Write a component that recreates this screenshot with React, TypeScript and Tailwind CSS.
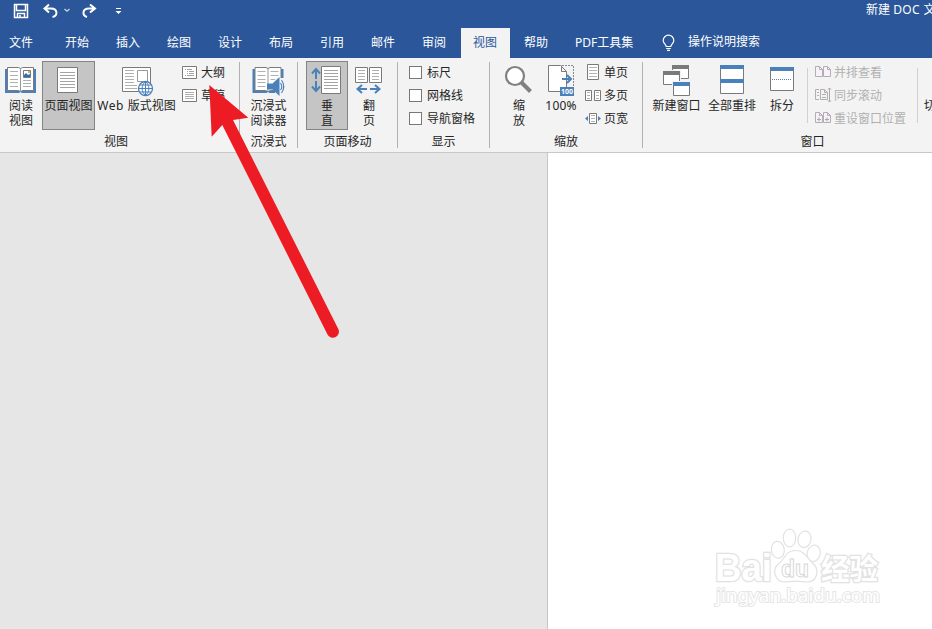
import type { ReactNode } from 'react';

const BLUE = '#4a81ba';
const GRAY = '#7a7a7a';
const LINE = '#b0b0b0';
const DIM = '#b5adb5';

const tabs = ['开始', '插入', '绘图', '设计', '布局', '引用', '邮件', '审阅', '视图', '帮助'];

/** Icon drawn in ribbon coordinates; the box is [x, y, width, height]. */
function Icon({ box, children }: { box: [number, number, number, number]; children: ReactNode }) {
  return (
    <svg className="block shrink-0" width={box[2]} height={box[3]} viewBox={box.join(' ')} fill="none">
      {children}
    </svg>
  );
}

function Lines({ x, w, ys, color = LINE }: { x: number; w: number; ys: number[]; color?: string }) {
  return <path d={ys.map((y) => `M${x} ${y + 0.5}h${w}`).join('')} stroke={color} />;
}

function BigButton({ x, w, lines, active, children, className = '' }: {
  x: number; w: number; lines: ReactNode[]; active?: boolean; children: ReactNode; className?: string;
}) {
  return (
    <div className={`flex h-[69px] shrink-0 flex-col items-center ${className} ${active ? 'bg-[#c5c5c5] outline outline-1 -outline-offset-1 outline-[#848484]' : ''}`} style={{ width: w }}>
      <Icon box={[x, 61, w, 37]}>{children}</Icon>
      {lines.map((l, i) => (
        <div key={i} className="h-[15px] leading-[15px] whitespace-nowrap">{l}</div>
      ))}
    </div>
  );
}

function Group({ label, className = '', labelClass = '', children, last }: {
  label: string; className?: string; labelClass?: string; children: ReactNode; last?: boolean;
}) {
  return (
    <>
      <div className={`flex shrink-0 flex-col pt-[3px] ${className}`}>
        <div className="flex h-[73px]">{children}</div>
        <div className={`text-center leading-4 ${labelClass}`}>{label}</div>
      </div>
      {!last && <div className="mt-1 h-[86px] w-px shrink-0 bg-[#b1b1b1]" />}
    </>
  );
}

function SmallRow({ children, label, className = '' }: { children: ReactNode; label: string; className?: string }) {
  return (
    <div className="flex h-[23px] items-center">
      {children}
      <span className={`leading-[15px] whitespace-nowrap ${className}`}>{label}</span>
    </div>
  );
}

function Book({ full }: { full?: boolean }) {
  return (
    <>
      <path d="M5 69h31v24H22l-1.500-1-1.500 1H5z" fill={BLUE} />
      <path d="M7.500 67.500h11l2 1 2-1h11v23H23l-2.500 1-2.500-1H7.500z" fill="#fff" stroke={GRAY} />
      <path d="M20.500 69v22" stroke="#999" />
      <Lines x={10} w={8} ys={[71, 75, 79, 82, 86]} />
      <Lines x={23} w={8} ys={full ? [71, 75, 79] : [80, 83, 86]} />
    </>
  );
}

function DimPages() {
  return <path d="M815.500 66.500h4l3 3v7h-7zM823.500 66.500h4l3 3v7h-7zM819.500 66.500v3h3M827.500 66.500v3h3" fill="#f8f2f8" stroke={DIM} />;
}

function QuickAccess() {
  return (
    <div className="flex h-7 items-start justify-between overflow-hidden">
      <svg width="130" height="24" fill="none">
        <path d="M14.500 4.500h13v13h-13zM16.500 4.500v6h9v-6M17.500 17.500v-4h7v4M20 15v2.500" stroke="#fff" strokeWidth="1.500" />
        <path d="M49 4.500 44.500 8.500l4.500 4M45 8.500h6c7 0 7 7.500 1.500 8.500" stroke="#fff" strokeWidth="2" />
        <path d="m64.500 9 2.500 2.200 2.500-2.200" stroke="#cbd6e8" strokeWidth="1.300" />
        <path d="m90 4.500 5 4-5 4M94.500 8.500H89c-7 0-7 7-2 8.500" stroke="#fff" strokeWidth="2" />
        <path d="M116 8.500h5" stroke="#fff" />
        <path d="M115.500 11h6l-3 3z" fill="#fff" />
      </svg>
      <div className="w-[66px] shrink-0 pt-0.5 leading-4 whitespace-nowrap text-white">新建 <span className="tracking-[0.4px]">DOC </span>文档</div>
    </div>
  );
}

function Tabs() {
  return (
    <div className="flex h-[30px] items-stretch leading-[29px] whitespace-nowrap text-white">
      <div className="w-[53px] pl-[9px]">文件</div>
      {tabs.map((t) => (
        <div key={t} className={`mr-0.5 w-[49px] shrink-0 pl-3 ${t === '视图' ? 'bg-[#f3f3f3] text-[#2b579a]' : ''}`}>{t}</div>
      ))}
      <div className="w-[99px] shrink-0 pl-3">PDF工具集</div>
      <svg className="mt-1.5 shrink-0" width="26" height="20" fill="none" stroke="#fff" strokeWidth="1.200">
        <path d="M4.200 12.500c0-2-3-3-3-6a5.300 5.300 0 0 1 10.600 0c0 3-3 4-3 6zM4.200 14.500h4.600M5 16.300h3" />
      </svg>
      <div className="leading-[28px]">操作说明搜索</div>
    </div>
  );
}

function Ribbon() {
  return (
    <div className="flex h-[95px] overflow-hidden border-b border-[#c8c8c8] bg-[#f3f3f3] text-[#262626]">
      <Group label="视图" className="w-[239px]" labelClass="pr-[7px]">
        <BigButton x={0} w={42} lines={['阅读', '视图']}>
          <Book />
          <path d="M23.500 70.500h7v7h-7z" fill="#fff" stroke={GRAY} />
          <path d="m24 77 0-2 2-2 2 2 2-1v3z" fill="#2f6faf" />
          <path d="M28 71h2v2h-2z" fill="#e8b25b" />
        </BigButton>
        <BigButton x={42} w={53} lines={['页面视图']} active>
          <path d="M57.500 67.500h20v25h-20z" fill="#fff" stroke={GRAY} />
          <Lines x={60} w={15} ys={[72, 75, 78, 81, 84, 87]} color="#a3a3a3" />
        </BigButton>
        <BigButton x={95} w={83} lines={[<><span className="tracking-[0.6px]">Web </span>版式视图</>]}>
          <path d="M122.500 67.500h28v24h-28z" fill="#fff" stroke={GRAY} />
          <path d="M137.500 70.500h10v11h-10z" stroke="#999" />
          <Lines x={125} w={9} ys={[70, 73, 76, 79, 82]} />
          <Lines x={125} w={12} ys={[85, 88]} />
          <circle cx="145.500" cy="88.500" r="7" fill="#fff" stroke={BLUE} strokeWidth="1.300" />
          <path d="M145.500 81.500v14M138.500 88.500h14M140 85h11M140 92h11M145.500 81.500c-4.500 4-4.500 10 0 14c4.500-4 4.500-10 0-14" stroke={BLUE} />
        </BigButton>
        <div className="ml-1 flex flex-col">
          <SmallRow label="大纲">
            <Icon box={[182, 65, 19, 14]}>
              <path d="M182.500 65.500h14v12h-14z" fill="#fff" stroke={GRAY} />
              <path d="M185 68.500h1M187 68.500h5M187 70.500h1M189 70.500h5M189 72.500h5M187 72.500h1M185 74.500h1M187 74.500h7" stroke="#a3a3a3" />
            </Icon>
          </SmallRow>
          <SmallRow label="草稿">
            <Icon box={[182, 65, 19, 14]}>
              <path d="M182.500 65.500h14v12h-14z" fill="#fff" stroke={GRAY} />
              <Lines x={185} w={9} ys={[68, 70, 72, 74]} />
            </Icon>
          </SmallRow>
        </div>
      </Group>

      <Group label="沉浸式" className="w-[57px]">
        <BigButton x={241} w={57} lines={['沉浸式', '阅读器']}>
          <g transform="translate(248.500 0)"><Book full /></g>
          <path d="M276 78h10v18h-10z" fill="#f3f3f3" />
          <path d="M268 83.500h5.500l7-6.500v19l-7-6.500H268z" fill={BLUE} />
          <path d="M281.500 83q2.500 4 0 7M282.500 80q4.500 6.500 0 13" stroke={BLUE} strokeWidth="1.100" />
        </BigButton>
      </Group>

      <Group label="页面移动" className="w-[99px]">
        <BigButton x={306} w={42} lines={['垂', '直']} active className="ml-2">
          <path d="M316 79V69m-4 4.500 4-4.500 4 4.500M316 81v10m-4-4.500 4 4.500 4-4.500" stroke={BLUE} strokeWidth="2" />
          <path d="M321.500 66.500h19v27h-19z" fill="#fff" stroke={GRAY} />
          <Lines x={324} w={14} ys={[70, 73, 76, 79, 82, 85, 88]} color="#a3a3a3" />
        </BigButton>
        <BigButton x={348} w={42} lines={['翻', '页']}>
          <path d="M355.500 67.500h12v15h-12zM369.500 67.500h12v15h-12z" fill="#fff" stroke={GRAY} />
          <Lines x={358} w={7} ys={[70, 73, 76, 79]} />
          <Lines x={372} w={7} ys={[70, 73, 76, 79]} />
          <path d="M367 89h-9m4-4-4.500 4 4.500 4M370 89h9m-4-4 4.500 4-4.500 4" stroke={BLUE} strokeWidth="2" />
        </BigButton>
      </Group>

      <Group label="显示" className="w-[91px]">
        <div className="ml-[11px] flex flex-col">
          {['标尺', '网格线', '导航窗格'].map((l) => (
            <SmallRow key={l} label={l}>
              <span className="mr-[5px] size-[13px] border border-[#777] bg-white" />
            </SmallRow>
          ))}
        </div>
      </Group>

      <Group label="缩放" className="w-[152px]">
        <BigButton x={498} w={42} lines={['缩', '放']} className="ml-2">
          <path d="m521.500 82.500 9 9" stroke="#808080" strokeWidth="4" />
          <circle cx="515" cy="76" r="9" fill="#fff" stroke="#808080" strokeWidth="2.200" />
        </BigButton>
        <BigButton x={540} w={42} lines={[<span className="tracking-[0.2px]">100%</span>]}>
          <path d="M548.500 65.500h12l6 6v20h-18z" fill="#fff" stroke={GRAY} />
          <path d="M561.500 65.500v6h5" stroke={GRAY} />
          <path d="M562 65.500h11.500V87" stroke="#888" strokeDasharray="2 1" />
          <path d="M562 79h9m-4-4 4 4-4 4" stroke={BLUE} strokeWidth="2" />
          <path d="M560 87h14v9h-14z" fill={BLUE} />
          <text x="567" y="94.300" fill="#fff" fontSize="7" fontWeight="700" textAnchor="middle" className="font-['Noto_Sans',sans-serif]">100</text>
        </BigButton>
        <div className="ml-[3px] flex flex-col">
          <SmallRow label="单页">
            <Icon box={[585, 64, 19, 17]}>
              <path d="M587.500 64.500h11v15h-11z" fill="#fff" stroke={GRAY} />
              <Lines x={589} w={8} ys={[67, 70, 73, 76]} />
            </Icon>
          </SmallRow>
          <SmallRow label="多页">
            <Icon box={[585, 87, 19, 15]}>
              <path d="M585.500 89.500h6v10h-6zM594.500 89.500h6v10h-6z" fill="#fff" stroke={GRAY} />
              <Lines x={587} w={3} ys={[91, 94, 97]} />
              <Lines x={596} w={3} ys={[91, 94, 97]} />
            </Icon>
          </SmallRow>
          <SmallRow label="页宽">
            <Icon box={[585, 110, 19, 15]}>
              <path d="M589.500 112.500h7v10h-7z" fill="#fff" stroke={GRAY} />
              <Lines x={591} w={4} ys={[114, 117, 120]} />
              <path d="m588 115-3 2.500 3 2.500zM598 115l3 2.500-3 2.500z" fill={BLUE} />
            </Icon>
          </SmallRow>
        </div>
      </Group>

      <Group label="窗口" className="w-[339px]" last>
        <BigButton x={649} w={55} lines={['新建窗口']} className="ml-1.5">
          <path d="M672.500 65.500h16v13h-16z" fill="#fff" stroke={GRAY} />
          <path d="M672 65h17v4h-17z" fill={GRAY} />
          <path d="M662 70h19v16h-19z" fill="#f3f3f3" />
          <path d="M663.500 71.500h16v13h-16z" fill="#fff" stroke={GRAY} />
          <path d="M663 71h17v4h-17z" fill={GRAY} />
          <path d="M672 81h19v16h-19z" fill="#f3f3f3" />
          <path d="M673.500 82.500h16v13h-16z" fill="#fff" stroke={GRAY} />
          <path d="M673 82h17v4h-17z" fill={BLUE} />
        </BigButton>
        <BigButton x={704} w={56} lines={['全部重排']}>
          <path d="M720.500 65.500h23v28h-23z" fill="#fff" stroke={GRAY} />
          <path d="M720 65h24v4h-24zM720 79h24v4h-24z" fill={BLUE} />
        </BigButton>
        <BigButton x={760} w={44} lines={['拆分']}>
          <path d="M770.500 67.500h23v23h-23z" fill="#fff" stroke={GRAY} />
          <path d="M770 67h24v4h-24z" fill={BLUE} />
          <path d="M772 79.500h20" stroke={BLUE} strokeDasharray="1 1" />
        </BigButton>
        <div className="mt-[7px] ml-[3px] h-[55px] w-px bg-[#d0d0d0]" />
        <div className="ml-[7px] flex w-[102px] flex-col text-[#b1b1b1]">
          <SmallRow label="并排查看">
            <Icon box={[815, 65, 19, 15]}><DimPages /></Icon>
          </SmallRow>
          <SmallRow label="同步滚动">
            <Icon box={[815, 87, 19, 17]}>
              <path d="M819 89.500h-3.500v10h3.500M820.500 89.500h4l3 3v7h-7zM824.500 89.500v3h3" stroke={DIM} />
              <path d="M817 92.500h2M817 95.500h2M822 94.500h4M822 97.500h4" stroke={DIM} />
              <path d="M829.500 88v14m-1.500-12.500 1.500-1.500 1.500 1.500M828 100.500l1.500 1.500 1.500-1.500" stroke="#a9a9a9" />
            </Icon>
          </SmallRow>
          <SmallRow label="重设窗口位置">
            <Icon box={[815, 65, 19, 15]}>
              <DimPages />
              <path d="M817 73.500h4M819 71.500v4M825 73.500h4M827 71.500v4" stroke="#aaa" />
            </Icon>
          </SmallRow>
        </div>
        <div className="mt-[7px] h-[55px] w-px bg-[#d0d0d0]" />
        <div className="ml-1.5 w-12 pt-[37px] leading-[15px] whitespace-nowrap">切换窗口</div>
      </Group>
    </div>
  );
}

function Watermark() {
  return (
    <svg className="absolute right-[42px] bottom-[14px]" width="180" height="92" viewBox="710 523 180 92" fill="#fff" stroke="#e2e2e2" strokeWidth="1.200">
      <g strokeWidth="2.600" paintOrder="stroke" className="font-['Liberation_Sans',sans-serif]" fontWeight="700">
        <text x="715" y="581" fontSize="38" textLength="57" lengthAdjust="spacingAndGlyphs">Bai</text>
        <text x="821" y="580" fontSize="29" fontWeight="700" textLength="57" lengthAdjust="spacingAndGlyphs" className="font-['Noto_Sans_CJK_SC',sans-serif]">经验</text>
      </g>
      <ellipse cx="777.800" cy="549.800" rx="6.500" ry="8.500" transform="rotate(-8 777.800 549.800)" />
      <ellipse cx="789.500" cy="538" rx="6.200" ry="8.800" />
      <ellipse cx="804.500" cy="539.300" rx="6.500" ry="8.300" transform="rotate(12 804.500 539.300)" />
      <ellipse cx="813.700" cy="553.300" rx="6.500" ry="8.300" transform="rotate(12 813.700 553.300)" />
      <path d="M795.500 550.500c-10 0-10 8-16.500 13-8 6-4 18.500 6 18.500 4 0 7-.8 11-.8s7 .8 11 .8c10 0 13-12 6.500-18-7-6-8-13.500-18-13.500z" />
      <text x="781" y="577" fontSize="23" fontWeight="700" strokeWidth="1" stroke="#d8d8d8" textLength="28" lengthAdjust="spacingAndGlyphs" className="font-['Liberation_Sans',sans-serif]">du</text>
      <text x="716" y="602" fontSize="18" strokeWidth="2" stroke="#e6e6e6" paintOrder="stroke" textLength="164" lengthAdjust="spacingAndGlyphs" className="font-['Noto_Sans',sans-serif]">jingyan.baidu.com</text>
    </svg>
  );
}

export default function App() {
  return (
    <div className="relative flex h-[629px] w-[932px] flex-col overflow-hidden bg-[#2b579a] font-['Noto_Sans','Noto_Sans_CJK_SC',sans-serif] text-[12px]">
      <QuickAccess />
      <Tabs />
      <Ribbon />
      <div className="flex flex-1 bg-[#e6e6e6]">
        <div className="box-content w-[547px] border-r border-[#c6c6c6]" />
        <div className="relative flex-1 bg-white">
          <Watermark />
        </div>
      </div>
      <svg className="pointer-events-none absolute top-0 left-0" width="360" height="350">
        <path d="M209.300 85 248.300 117.700 233 120 338.300 329a6 6 0 0 1-10.800 5.400L222.300 125l-10.600 11.700z" fill="#ed1c24" />
      </svg>
    </div>
  );
}
